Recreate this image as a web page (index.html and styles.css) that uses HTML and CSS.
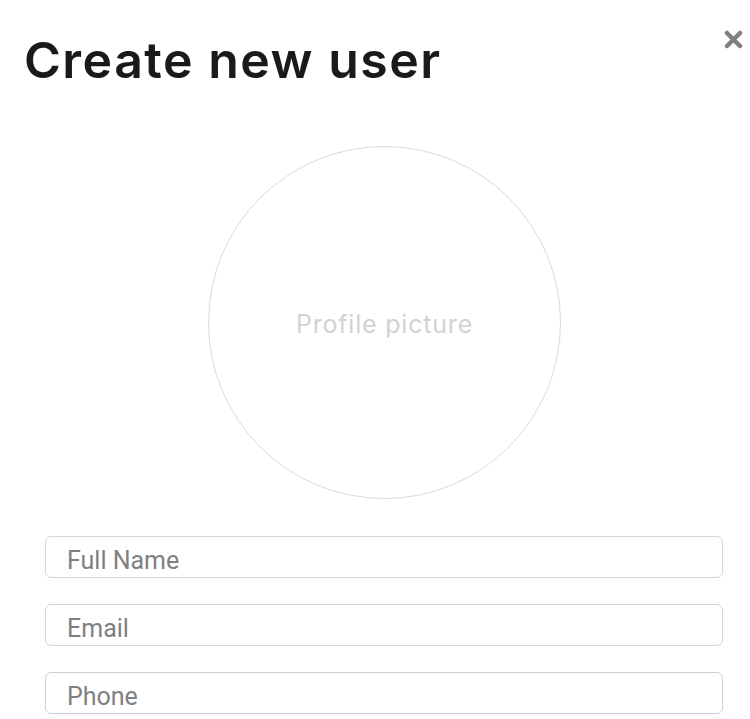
FILE: index.html
```html
<!DOCTYPE html>
<html lang="en">
<head>
<meta charset="utf-8">
<title>Create new user</title>
<link rel="stylesheet" href="styles.css">
</head>
<body>
<div class="modal">
  <header class="modal-header">
    <h1 class="title">Create new user</h1>
    <button class="close" aria-label="Close">
      <svg width="19" height="19" viewBox="0 0 19 19"><path d="M3 3 L16 16 M16 3 L3 16" stroke="#808080" stroke-width="4.5" stroke-linecap="round"/></svg>
    </button>
  </header>
  <div class="avatar-wrap">
    <div class="avatar"><span class="avatar-label">Profile picture</span></div>
  </div>
  <form class="fields">
    <input class="field" type="text" placeholder="Full Name">
    <input class="field" type="email" placeholder="Email">
    <input class="field field-phone" type="tel" placeholder="Phone">
  </form>
</div>
</body>
</html>
```
FILE: styles.css
```css
html, body {
  margin: 0;
  padding: 0;
  background: #ffffff;
}
.modal {
  width: 750px;
  height: 719px;
  overflow: hidden;
  box-sizing: border-box;
  padding-top: 30px;
}
.modal-header {
  display: flex;
  justify-content: space-between;
  align-items: flex-start;
  padding: 0 7px 0 24px;
}
.title {
  margin: 0;
  font-family: "Inter", "Liberation Sans", sans-serif;
  font-weight: 600;
  font-size: 50px;
  line-height: 60px;
  color: #1a1a1a;
  letter-spacing: 1.5px;
}
.close {
  border: 0;
  background: none;
  padding: 0;
  margin-top: 0;
  width: 19px;
  height: 19px;
  cursor: pointer;
}
.close svg { display: block; }
.avatar-wrap {
  display: flex;
  justify-content: center;
  margin-top: 56px;
}
.avatar {
  width: 353px;
  height: 353px;
  box-sizing: border-box;
  border: 1.5px solid #d9d9d9;
  border-radius: 50%;
  display: flex;
  align-items: center;
  justify-content: center;
  margin-left: 19px;
}
.avatar-label {
  font-family: "Inter", "Liberation Sans", sans-serif;
  font-size: 25px;
  letter-spacing: 0.8px;
  color: #d2d2d2;
  margin-top: 2px;
}
.fields {
  display: flex;
  flex-direction: column;
  gap: 26px;
  margin: 37px 27px 0 45px;
}
.field {
  height: 42px;
  box-sizing: border-box;
  border: 1.5px solid #d6d6d6;
  border-radius: 6px;
  padding: 7px 20px 0 21px;
  font-family: "Roboto", sans-serif;
  font-size: 25px;
  color: #333;
  background: #fff;
  outline: none;
}
.field::placeholder {
  color: #808080;
}
.field-phone {
  border-color: #cfcfda;
}
```
